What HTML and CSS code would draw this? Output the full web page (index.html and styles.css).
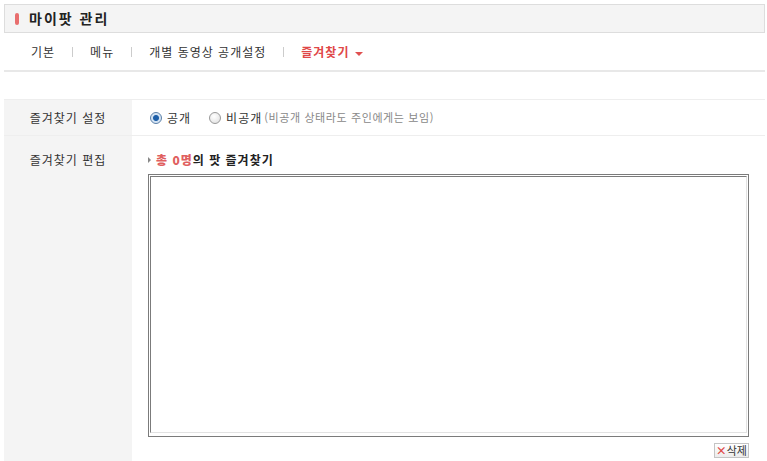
FILE: index.html
```html
<!DOCTYPE html>
<html lang="ko">
<head>
  <meta charset="UTF-8">
  <title>마이팟 관리</title>
  <link rel="stylesheet" href="styles.css">
</head>
<body>
  <div class="wrap">
    <h2 class="title"><span class="pill"></span>마이팟 관리</h2>

    <ul class="tabs">
      <li><a href="#">기본</a></li>
      <li class="sep"></li>
      <li><a href="#">메뉴</a></li>
      <li class="sep"></li>
      <li><a href="#">개별 동영상 공개설정</a></li>
      <li class="sep"></li>
      <li class="on"><a href="#">즐겨찾기</a><span class="caret"></span></li>
    </ul>

    <div class="form">
      <div class="row">
        <div class="label">즐겨찾기 설정</div>
        <div class="field">
          <label class="radio"><span class="dot checked"></span>공개</label>
          <label class="radio"><span class="dot"></span>비공개 <em>(비공개 상태라도 주인에게는 보임)</em></label>
        </div>
      </div>
      <div class="row edit">
        <div class="label">즐겨찾기 편집</div>
        <div class="field">
          <p class="count"><span class="arr"></span><b>총 0명</b>의 팟 즐겨찾기</p>
          <div class="box"><div class="list"></div></div>
          <div class="btns"><button class="del"><span class="x">×</span>삭제</button></div>
        </div>
      </div>
    </div>
  </div>
</body>
</html>
```

FILE: styles.css
```css
body {
  margin: 0;
  font-family: "Noto Sans CJK KR", "Noto Sans", sans-serif;
  font-size: 12px;
  letter-spacing: 1px;
  color: #333;
  background: #fff;
}
.wrap {
  padding: 4px 2px 0 4px;
}
.title {
  margin: 0;
  height: 27px;
  border: 1px solid #ddd;
  background: #f4f4f4;
  font-size: 14px;
  font-weight: bold;
  letter-spacing: 2px;
  color: #222;
  line-height: 27px;
  padding-left: 10px;
  display: flex;
  align-items: center;
}
.pill {
  width: 4px;
  height: 12px;
  border-radius: 2px;
  background: #e86e6e;
  margin-right: 10px;
}
.tabs {
  list-style: none;
  margin: 0;
  padding: 0 0 0 27px;
  height: 37px;
  display: flex;
  align-items: center;
  border-bottom: 2px solid #e8e8e8;
}
.tabs a {
  color: #333;
  text-decoration: none;
}
.tabs .sep {
  width: 1px;
  height: 10px;
  background: #ccc;
  margin: 0 17px;
}
.tabs .on a {
  color: #e04848;
  font-weight: bold;
}
.caret {
  display: inline-block;
  margin-left: 6px;
  vertical-align: middle;
  border-left: 4px solid transparent;
  border-right: 4px solid transparent;
  border-top: 4px solid #e05050;
}
.form {
  margin-top: 27px;
  border-top: 1px solid #eee;
}
.row {
  display: flex;
  border-bottom: 1px solid #eee;
}
.label {
  width: 128px;
  flex: none;
  background: #f4f4f4;
  text-align: center;
  padding: 9px 0;
  line-height: 17px;
}
.field {
  flex: 1;
  padding: 9px 0 0 18px;
  line-height: 17px;
  display: flex;
  align-items: flex-start;
}
.radio {
  display: flex;
  align-items: center;
  margin-right: 18px;
}
.radio em {
  font-style: normal;
  font-size: 11px;
  letter-spacing: 0.6px;
  color: #888;
  margin-left: 2px;
}
.dot {
  width: 10px;
  height: 10px;
  border-radius: 50%;
  border: 1px solid #999;
  background: radial-gradient(circle at 40% 35%, #fff, #ddd);
  margin-right: 5px;
}
.dot.checked {
  border-color: #5a7fa8;
  background: radial-gradient(circle, #1c5ea8 0 2.5px, #cfe0f2 3.5px, #eef4fa);
}
.edit {
  border-bottom: none;
  height: 330px;
}
.edit .label {
  padding-top: 15px;
}
.edit .field {
  display: block;
  padding: 15px 16px 0 16px;
}
.count {
  margin: 0 0 6px;
  font-weight: bold;
  color: #222;
  display: flex;
  align-items: center;
}
.count b {
  color: #e06060;
}
.arr {
  border-top: 3px solid transparent;
  border-bottom: 3px solid transparent;
  border-left: 3px solid #888;
  margin-right: 5px;
}
.box {
  height: 259px;
  border: 1px solid #7b7b7b;
  padding: 1px;
}
.list {
  height: 255px;
  border: 1px solid;
  border-color: #7b7b7b #e2e2e2 #e2e2e2 #7b7b7b;
  background: #fff;
}
.btns {
  text-align: right;
  padding-top: 4px;
}
.del {
  font-family: inherit;
  font-size: 11px;
  letter-spacing: 0;
  line-height: 12px;
  height: 15px;
  padding: 0 1px;
  border: 1px solid #c4c4c4;
  background: linear-gradient(#fff, #ececec);
  color: #333;
}
.del .x {
  color: #e04848;
  font-weight: bold;
}
```
